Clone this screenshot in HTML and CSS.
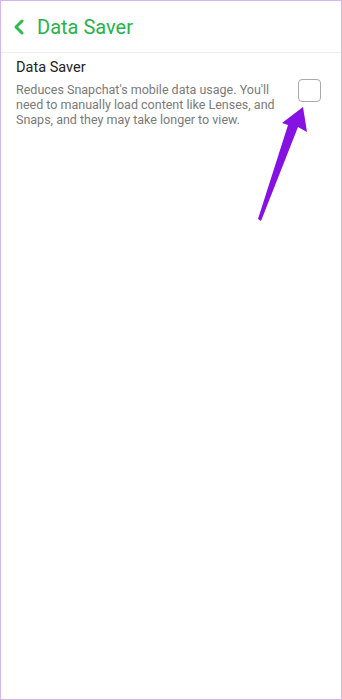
FILE: index.html
```html
<!DOCTYPE html>
<html>
<head>
  <meta charset="utf-8">
  <meta name="viewport" content="width=device-width">
  <title>Data Saver</title>
  <link rel="stylesheet" href="styles.css">
</head>
<body>
  <div class="screen">
    <header class="topbar">
      <svg class="back" width="12" height="16" viewBox="0 0 12 16">
        <path d="M9 2 L3 8 L9 14" fill="none" stroke="#2dbb4e" stroke-width="3" stroke-linecap="round" stroke-linejoin="round"/>
      </svg>
      <h1 class="title">Data Saver</h1>
    </header>

    <div class="setting">
      <div class="setting-text">
        <div class="setting-name">Data Saver</div>
        <p class="setting-desc">Reduces Snapchat's mobile data usage. You'll need to manually load content like Lenses, and Snaps, and they may take longer to view.</p>
      </div>
      <span class="checkbox"></span>
    </div>

    <!-- annotation arrow pointing at the checkbox -->
    <svg class="pointer" width="342" height="240" viewBox="0 0 342 240">
      <polygon points="303,107 307,132 298,127 261,221 258,219 288,125 282,123" fill="#8512e3"/>
    </svg>
  </div>
</body>
</html>
```

FILE: styles.css
```css
html, body {
  margin: 0;
  padding: 0;
  background: #fff;
}

.screen {
  position: relative;
  width: 342px;
  height: 700px;
  box-sizing: border-box;
  border: 1px solid #d7b5ef;
  background: #fff;
  font-family: Roboto, "Noto Sans", sans-serif;
  overflow: hidden;
}

.topbar {
  display: flex;
  align-items: center;
  height: 51px;
  padding-left: 12px;
  border-bottom: 1px solid #efefef;
}

.back {
  margin-right: 12px;
}

.title {
  margin: 0;
  font-size: 20px;
  font-weight: 400;
  color: #27b34b;
}

.setting {
  display: flex;
  align-items: flex-start;
  padding: 5px 20px 0 15px;
}

.setting-text {
  flex: 1;
  max-width: 262px;
}

.setting-name {
  font-size: 14.5px;
  color: #222;
  line-height: 20px;
}

.setting-desc {
  margin: 4px 0 0;
  font-size: 12.5px;
  line-height: 15px;
  color: #7a7a7a;
}

.checkbox {
  margin-left: auto;
  margin-top: 21px;
  width: 21px;
  height: 21px;
  border: 1.5px solid #a9a9a9;
  border-radius: 4px;
}

.pointer {
  position: absolute;
  left: -1px;
  top: -1px;
}
```
